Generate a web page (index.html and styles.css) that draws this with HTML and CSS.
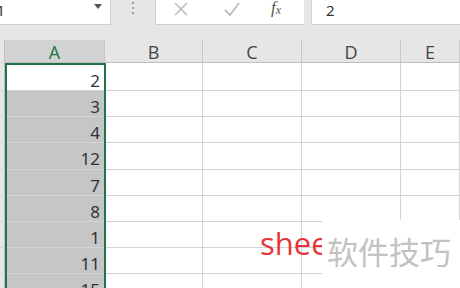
FILE: index.html
```html
<!DOCTYPE html>
<html lang="zh">
<head>
    <meta charset="UTF-8">
    <title>Sheet</title>
    <link rel="stylesheet" href="styles.css">
</head>
<body>
    <div class="toolbar">
        <div class="namebox">
            <span class="cellref">A1</span>
            <svg class="drop" width="8" height="5" viewBox="0 0 8 5"><path d="M0 0H8L4 5Z" fill="#555"/></svg>
        </div>
        <div class="dots"><i></i><i></i><i></i></div>
        <div class="fxbox">
            <svg class="btn-x" width="16" height="16" viewBox="0 0 16 16"><path d="M2 2L14 14M14 2L2 14" stroke="#bdbdbd" stroke-width="1.6" fill="none"/></svg>
            <svg class="btn-ok" width="16" height="14" viewBox="0 0 16 14"><path d="M1 8L6 13L15 1" stroke="#bdbdbd" stroke-width="1.8" fill="none"/></svg>
            <span class="fx">f<sub>x</sub></span>
        </div>
        <div class="formula">2</div>
    </div>

    <div class="sheet">
        <div class="corner"></div>
        <div class="colhead active">A</div>
        <div class="colhead">B</div>
        <div class="colhead">C</div>
        <div class="colhead">D</div>
        <div class="colhead">E</div>

        <div class="rowhead first"></div><div class="cell num current first">2</div><div class="cell first"></div><div class="cell first"></div><div class="cell first"></div><div class="cell first"></div>
        <div class="rowhead"></div><div class="cell num sel">3</div><div class="cell"></div><div class="cell"></div><div class="cell"></div><div class="cell"></div>
        <div class="rowhead"></div><div class="cell num sel">4</div><div class="cell"></div><div class="cell"></div><div class="cell"></div><div class="cell"></div>
        <div class="rowhead"></div><div class="cell num sel">12</div><div class="cell"></div><div class="cell"></div><div class="cell"></div><div class="cell"></div>
        <div class="rowhead"></div><div class="cell num sel">7</div><div class="cell"></div><div class="cell"></div><div class="cell"></div><div class="cell"></div>
        <div class="rowhead"></div><div class="cell num sel">8</div><div class="cell"></div><div class="cell"></div><div class="cell"></div><div class="cell"></div>
        <div class="rowhead"></div><div class="cell num sel">1</div><div class="cell"></div><div class="cell"></div><div class="cell"></div><div class="cell"></div>
        <div class="rowhead"></div><div class="cell num sel">11</div><div class="cell"></div><div class="cell"></div><div class="cell"></div><div class="cell"></div>
        <div class="rowhead"></div><div class="cell num sel">15</div><div class="cell"></div><div class="cell"></div><div class="cell"></div><div class="cell"></div>

        <div class="selection"></div>
    </div>

    <div class="stamp-red">sheet</div>
    <div class="stamp">软件技巧</div>
</body>
</html>
```

FILE: styles.css
```css
html {
    overflow: hidden;
}
body {
    margin: 0;
    width: 460px;
    height: 288px;
    overflow: hidden;
    background-color: #e6e6e6;
    font-family: "Noto Sans", "Liberation Sans", sans-serif;
    position: relative;
}
.toolbar {
    display: flex;
    height: 25px;
}
.namebox {
    width: 111px;
    background-color: #fff;
    border-right: 1px solid #cfcfcf;
    border-bottom: 1px solid #cfcfcf;
    box-sizing: border-box;
    display: flex;
    align-items: flex-start;
    justify-content: space-between;
    overflow: hidden;
}
.cellref {
    font-size: 15px;
    color: #333;
    line-height: 20px;
    margin-left: -13px;
}
.drop {
    margin: 4px 8px 0 0;
}
.dots {
    width: 44px;
    display: flex;
    flex-direction: column;
    align-items: center;
    gap: 3px;
    padding-top: 2px;
}
.dots i {
    width: 2px;
    height: 2px;
    background-color: #9a9a9a;
}
.fxbox {
    width: 149px;
    background-color: #fff;
    border-left: 1px solid #d0d0d0;
    border-bottom: 1px solid #cfcfcf;
    box-sizing: border-box;
    position: relative;
}
.btn-x {
    position: absolute;
    left: 17px;
    top: 1px;
}
.btn-ok {
    position: absolute;
    left: 68px;
    top: 2px;
}
.fx {
    position: absolute;
    left: 115px;
    top: -2px;
    font-family: "Liberation Serif", serif;
    font-style: italic;
    font-size: 17px;
    color: #555;
}
.fx sub {
    font-size: 12px;
    vertical-align: -1px;
}
.formula {
    flex: 1;
    margin-left: 7px;
    background-color: #fff;
    border-left: 1px solid #d0d0d0;
    border-bottom: 1px solid #cfcfcf;
    padding-left: 14px;
    font-size: 15px;
    line-height: 20px;
    color: #333;
}
.sheet {
    margin-top: 15px;
    display: grid;
    grid-template-columns: 5px 100px 98px 99px 99px 59px;
    grid-template-rows: 23px 28px 26px 26px 27px 26px 26px 26px 26px 26px;
    background-color: #fff;
    position: relative;
}
.corner, .rowhead {
    background-color: #e6e6e6;
    border-right: 1px solid #bdbdbd;
    border-bottom: 1px solid #d4d4d4;
    box-sizing: border-box;
}
.colhead {
    background-color: #e6e6e6;
    border-right: 1px solid #c6c6c6;
    border-bottom: 1px solid #bdbdbd;
    box-sizing: border-box;
    font-family: "Open Sans", sans-serif;
    font-size: 18px;
    line-height: 25px;
    color: #444;
    text-align: center;
}
.colhead.active {
    background-color: #d3d3d3;
    color: #217346;
}
.cell {
    border-right: 1px solid #d4d4d4;
    border-bottom: 1px solid #d4d4d4;
    box-sizing: border-box;
}
.num {
    text-align: right;
    padding-right: 4px;
    font-size: 17px;
    line-height: 21px;
    padding-top: 5px;
    color: #333;
}
.num.first {
    padding-top: 7px;
}
.sel {
    background-color: #c6c6c6;
}
.current {
    background-color: #fff;
}
.selection {
    position: absolute;
    left: 5px;
    top: 23px;
    width: 101px;
    height: 250px;
    border: 2px solid #217346;
    box-sizing: border-box;
}
.stamp-red {
    position: absolute;
    left: 260px;
    top: 222px;
    font-family: "Open Sans", sans-serif;
    font-size: 31px;
    color: #e8353c;
}
.stamp {
    position: absolute;
    left: 322px;
    top: 220px;
    width: 138px;
    height: 68px;
    background-color: #fff;
    padding: 11px 0 0 5px;
    box-sizing: border-box;
    font-family: "Noto Sans CJK SC", sans-serif;
    font-size: 31px;
    line-height: 40px;
    color: #c2c2c2;
    white-space: nowrap;
    overflow: hidden;
}
```
